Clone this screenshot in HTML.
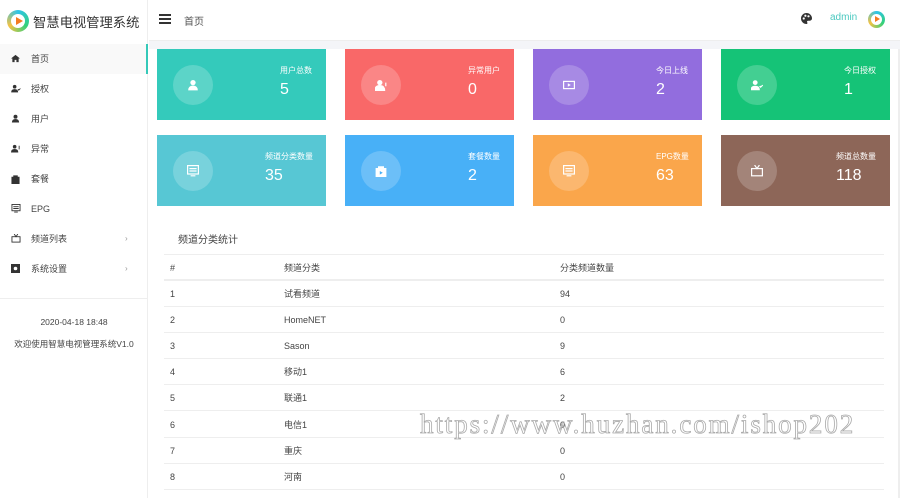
<!DOCTYPE html>
<html><head><meta charset="utf-8"><style>
*{margin:0;padding:0;box-sizing:border-box}
body{width:900px;height:498px;overflow:hidden;background:#fff;font-family:"Liberation Sans","Noto Sans CJK SC",sans-serif;position:relative;color:#333}
.abs{position:absolute}
.side{left:0;top:0;width:148px;height:498px;border-right:1px solid #eee;background:#fff}
.item{position:absolute;left:0;width:148px;height:30px;font-size:9px;color:#444;line-height:30px;padding-left:31px}
.item svg{position:absolute;left:11px;top:10px}
.item .ar{position:absolute;left:125px;color:#999;font-size:8px}
.card{position:absolute;width:169px;height:71px;color:#fff}
.card .c{position:absolute;left:16px;top:16px;width:40px;height:40px;border-radius:50%;background:rgba(255,255,255,.2)}
.card .t{position:absolute;right:14px;top:16px;font-size:8px;width:70px}
.card .n{position:absolute;left:123px;top:32px;font-size:16px}
.card .c svg{position:absolute;left:14px;top:14px}
.row{position:absolute;left:164px;width:720px;height:26px;border-bottom:1px solid #eee;font-size:9px;line-height:26px;color:#444}
.row span{position:absolute}
</style></head><body>
<div class="abs side">
 <div class="abs" style="left:7px;top:10px;width:22px;height:22px;border-radius:50%;background:conic-gradient(#2ec4e8,#33d17a,#f5c242,#2ec4e8)"></div>
 <div class="abs" style="left:11px;top:14px;width:14px;height:14px;border-radius:50%;background:#fff"></div>
 <div class="abs" style="left:16px;top:17px;width:0;height:0;border-left:7px solid #f47c20;border-top:4px solid transparent;border-bottom:4px solid transparent"></div>
 <div class="abs" style="left:33px;top:12px;font-size:13.3px;color:#333">智慧电视管理系统</div>
 <div class="abs" style="left:0;top:44px;width:148px;height:30px;background:#f9f9f9;border-right:2px solid #35c9b9"></div>
 <div class="item" style="top:44px"><svg width="9" height="9" viewBox="0 0 10 10"><path d="M5 1L0 5h1.5v4h2.5V6.5h2V9h2.5V5H10z" fill="#333"/></svg>首页</div>
 <div class="item" style="top:74px"><svg width="10" height="9" viewBox="0 0 10 10"><circle cx="3.5" cy="3" r="2" fill="#333"/><path d="M0 9q0-3 3.5-3t3.5 3z M7 6l1 1 2-2" fill="#333" stroke="#333" stroke-width=".7"/></svg>授权</div>
 <div class="item" style="top:104px"><svg width="9" height="9" viewBox="0 0 10 10"><circle cx="5" cy="3" r="2.2" fill="#333"/><path d="M1 9.5q0-4 4-4t4 4z" fill="#333"/></svg>用户</div>
 <div class="item" style="top:134px"><svg width="10" height="9" viewBox="0 0 10 10"><circle cx="3.5" cy="3" r="2" fill="#333"/><path d="M0 9q0-3 3.5-3t3.5 3z M8.5 2v4" fill="#333" stroke="#333"/></svg>异常</div>
 <div class="item" style="top:164px"><svg width="9" height="10" viewBox="0 0 10 10"><path d="M1 3h8v7H1z M3 3V1.5h4V3" fill="#333" stroke="#333"/></svg>套餐</div>
 <div class="item" style="top:194px"><svg width="10" height="9" viewBox="0 0 10 10"><rect x=".5" y=".5" width="9" height="7" fill="none" stroke="#333"/><path d="M2 3h6M2 5h6M3 9h4" stroke="#333"/></svg>EPG</div>
 <div class="item" style="top:224px"><svg width="10" height="9" viewBox="0 0 10 10"><rect x=".5" y="3" width="9" height="6" fill="none" stroke="#333"/><path d="M3 0l2 3 2-3" fill="none" stroke="#333"/></svg>频道列表<span class="ar">›</span></div>
 <div class="item" style="top:254px"><svg width="9" height="9" viewBox="0 0 10 10"><rect x="0" y="0" width="10" height="10" fill="#333"/><circle cx="5" cy="5" r="2" fill="#fff"/></svg>系统设置<span class="ar">›</span></div>
 <div class="abs" style="left:0;top:298px;width:148px;border-top:1px solid #eee"></div>
 <div class="abs" style="left:0;top:317px;width:148px;text-align:center;font-size:8.5px;color:#444">2020-04-18 18:48</div>
 <div class="abs" style="left:0;top:338px;width:148px;text-align:center;font-size:8.5px;color:#444">欢迎使用智慧电视管理系统V1.0</div>
</div>
<div class="abs" style="left:149px;top:0;width:751px;height:41px;border-bottom:1px solid #eee"></div>
<div class="abs" style="left:159px;top:14px;width:12px;height:1.5px;background:#333;box-shadow:0 4px 0 #333,0 8px 0 #333"></div>
<div class="abs" style="left:184px;top:13px;font-size:10px;color:#555">首页</div>
<svg class="abs" style="left:801px;top:13px" width="11" height="11" viewBox="0 0 10 10"><path d="M5 0a5 5 0 1 0 0 10c1 0 1-1 .6-1.6S5.6 7 6.6 7H8a2 2 0 0 0 2-2A5 5 0 0 0 5 0z" fill="#333"/><circle cx="2.5" cy="5" r="1" fill="#fff"/><circle cx="4" cy="2.5" r="1" fill="#fff"/><circle cx="6.8" cy="3" r="1" fill="#fff"/></svg>
<div class="abs" style="left:830px;top:12px;font-size:10px;color:#4cc9c0">admin</div>
<div class="abs" style="left:868px;top:11px;width:17px;height:17px;border-radius:50%;background:conic-gradient(#2ec4e8,#33d17a,#f5c242,#2ec4e8)"></div>
<div class="abs" style="left:871px;top:14px;width:11px;height:11px;border-radius:50%;background:#fff"></div>
<div class="abs" style="left:875px;top:16px;border-left:5px solid #f47c20;border-top:3.5px solid transparent;border-bottom:3.5px solid transparent"></div>
<div class="abs" style="left:149px;top:41px;width:751px;height:8px;background:#f4f5f8"></div>

<div class="card" style="left:157px;top:49px;background:#34cabb"><div class="c"><svg width="12" height="12" viewBox="0 0 10 10"><circle cx="5" cy="3" r="2.2" fill="#fff"/><path d="M1 9.5q0-4 4-4t4 4z" fill="#fff"/></svg></div><div class="t" style="left:123px">用户总数</div><div class="n">5</div></div>
<div class="card" style="left:345px;top:49px;background:#f96868"><div class="c"><svg width="12" height="12" viewBox="0 0 10 10"><circle cx="4" cy="3" r="2.2" fill="#fff"/><path d="M0 9.5q0-4 4-4t4 4z M9 3v3" fill="#fff" stroke="#fff"/></svg></div><div class="t" style="left:123px">异常用户</div><div class="n">0</div></div>
<div class="card" style="left:533px;top:49px;background:#926dde"><div class="c"><svg width="12" height="12" viewBox="0 0 10 10"><rect x=".5" y="2" width="9" height="6" fill="none" stroke="#fff"/><path d="M4 3.5l2.5 1.5L4 6.5z" fill="#fff"/></svg></div><div class="t" style="left:123px">今日上线</div><div class="n">2</div></div>
<div class="card" style="left:721px;top:49px;background:#15c377"><div class="c"><svg width="12" height="12" viewBox="0 0 10 10"><circle cx="3.5" cy="3" r="2" fill="#fff"/><path d="M0 9q0-3 3.5-3t3.5 3z M7 6l1 1 2-2" fill="#fff" stroke="#fff" stroke-width=".7"/></svg></div><div class="t" style="left:123px">今日授权</div><div class="n">1</div></div>

<div class="card" style="left:157px;top:135px;background:#57c7d4"><div class="c"><svg width="12" height="12" viewBox="0 0 10 10"><rect x=".5" y=".5" width="9" height="7" fill="none" stroke="#fff"/><path d="M2 3h6M2 5h6M3 9h4" stroke="#fff"/></svg></div><div class="t" style="left:108px">频道分类数量</div><div class="n" style="left:108px">35</div></div>
<div class="card" style="left:345px;top:135px;background:#48b0f7"><div class="c"><svg width="12" height="12" viewBox="0 0 10 10"><path d="M1 3h8v7H1z M3 3V1.5h4V3" fill="#fff" stroke="#fff"/><path d="M4 5l2.5 1.5L4 8z" fill="#48b0f7"/></svg></div><div class="t" style="left:123px">套餐数量</div><div class="n">2</div></div>
<div class="card" style="left:533px;top:135px;background:#faa64b"><div class="c"><svg width="12" height="12" viewBox="0 0 10 10"><rect x=".5" y=".5" width="9" height="7" fill="none" stroke="#fff"/><path d="M2 3h6M2 5h6M3 9h4" stroke="#fff"/></svg></div><div class="t" style="left:123px">EPG数量</div><div class="n">63</div></div>
<div class="card" style="left:721px;top:135px;background:#8d6658"><div class="c"><svg width="12" height="12" viewBox="0 0 10 10"><rect x=".5" y="3" width="9" height="6" fill="none" stroke="#fff"/><path d="M3 0l2 3 2-3" fill="none" stroke="#fff"/></svg></div><div class="t" style="left:115px">频道总数量</div><div class="n" style="left:115px">118</div></div>

<div class="abs" style="left:178px;top:231px;font-size:10px;color:#444">频道分类统计</div>
<div class="abs" style="left:164px;top:254px;width:720px;border-top:1px solid #eee"></div>
<div class="row" style="top:255px;border-bottom:2px solid #eee"><span style="left:6px">#</span><span style="left:120px">频道分类</span><span style="left:396px">分类频道数量</span></div>
<div class="row" style="top:281px"><span style="left:6px">1</span><span style="left:120px">试看频道</span><span style="left:396px">94</span></div>
<div class="row" style="top:307px"><span style="left:6px">2</span><span style="left:120px">HomeNET</span><span style="left:396px">0</span></div>
<div class="row" style="top:333px"><span style="left:6px">3</span><span style="left:120px">Sason</span><span style="left:396px">9</span></div>
<div class="row" style="top:359px"><span style="left:6px">4</span><span style="left:120px">移动1</span><span style="left:396px">6</span></div>
<div class="row" style="top:385px"><span style="left:6px">5</span><span style="left:120px">联通1</span><span style="left:396px">2</span></div>
<div class="row" style="top:412px"><span style="left:6px">6</span><span style="left:120px">电信1</span><span style="left:396px">0</span></div>
<div class="row" style="top:438px"><span style="left:6px">7</span><span style="left:120px">重庆</span><span style="left:396px">0</span></div>
<div class="row" style="top:464px"><span style="left:6px">8</span><span style="left:120px">河南</span><span style="left:396px">0</span></div>
<div class="abs" style="left:898px;top:49px;width:2px;height:449px;background:#eee"></div>
<div class="abs" style="left:420px;top:409px;font-family:'Liberation Serif',serif;font-size:27px;color:transparent;-webkit-text-stroke:0.8px #aaa;letter-spacing:1.9px;white-space:nowrap">https://www.huzhan.com/ishop202</div>
</body></html>
